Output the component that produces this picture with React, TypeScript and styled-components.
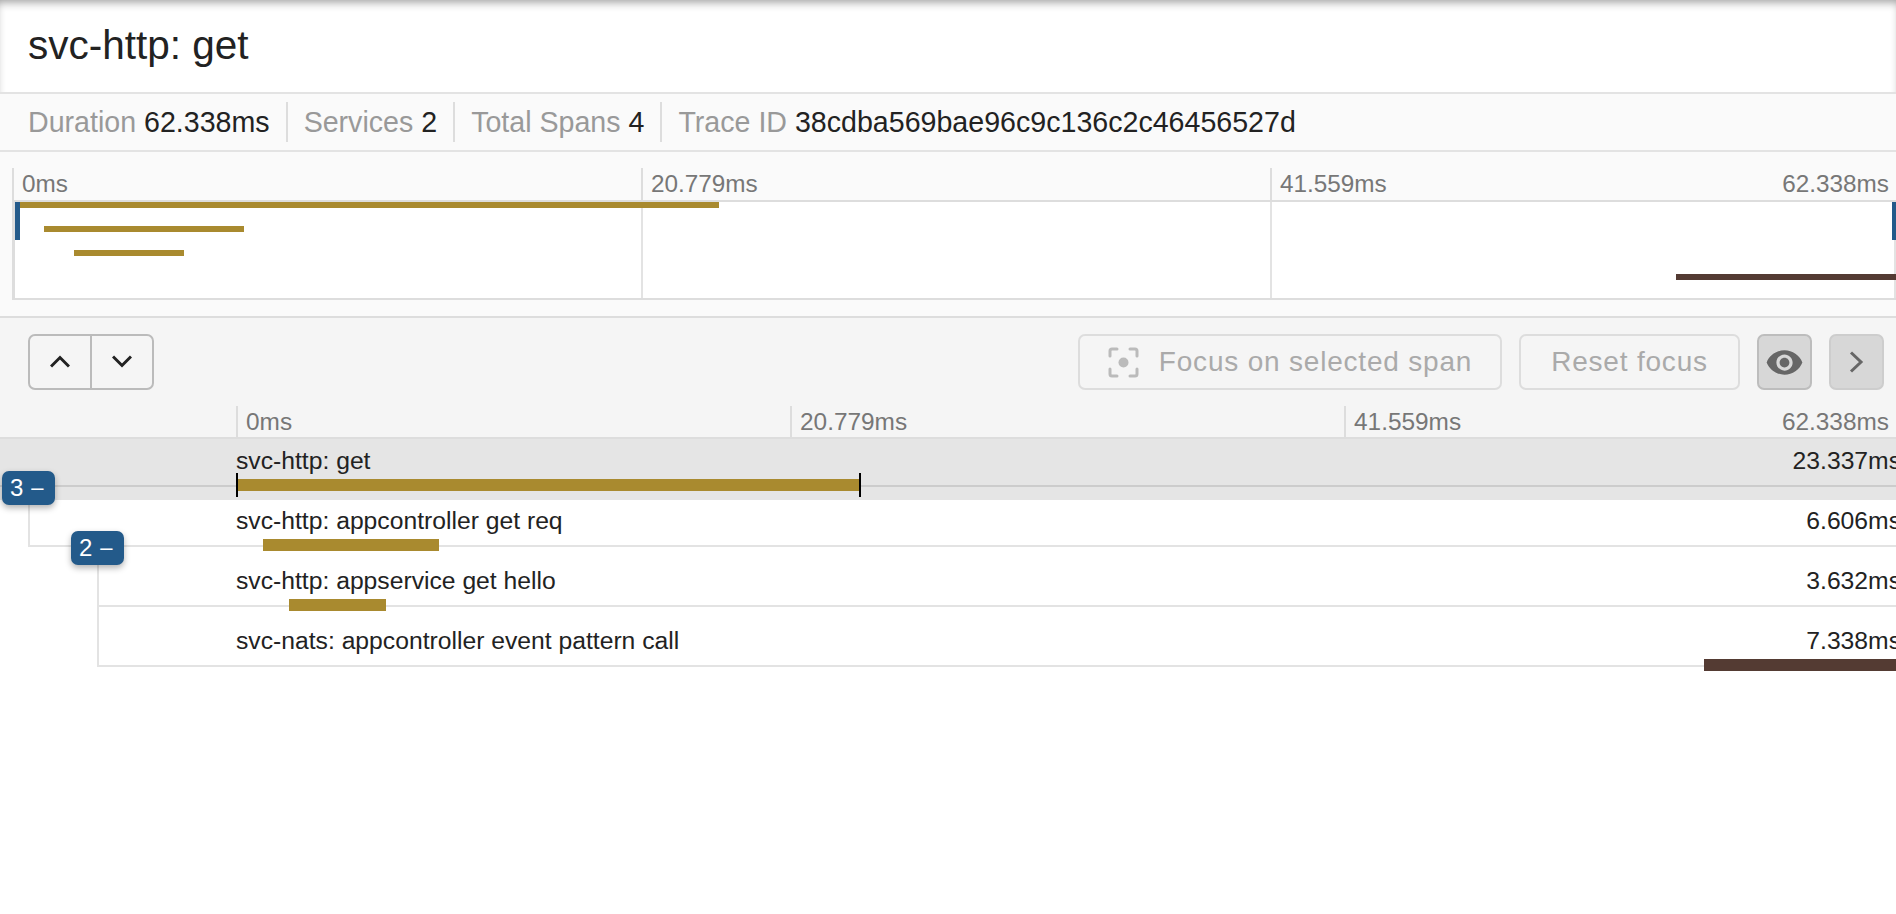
import React from "react"
import styled, { createGlobalStyle } from "styled-components"
import { MdVisibility } from "react-icons/md"

const TOTAL_LEFT = 236

const stats = [
  { label: "Duration", value: "62.338ms" },
  { label: "Services", value: "2" },
  { label: "Total Spans", value: "4" },
  { label: "Trace ID", value: "38cdba569bae96c9c136c2c46456527d" },
]

const miniBars = [
  { left: 20, width: 699, color: "#a98a2f" },
  { left: 44, width: 200, color: "#a98a2f" },
  { left: 74, width: 110, color: "#a98a2f" },
  { left: 1676, width: 220, color: "#543b33" },
]

const spans = [
  { name: "svc-http: get", time: "23.337ms", left: 237, width: 623, color: "#a98a2f", top: 40, indent: 0, pad: 7, height: 48, selected: true, badge: "3", badgeLeft: 2, badgeTop: 32 },
  { name: "svc-http: appcontroller get req", time: "6.606ms", left: 263, width: 176, color: "#a98a2f", top: 39, indent: 28, pad: 6, height: 47, badge: "2", badgeLeft: 71, badgeTop: 31 },
  { name: "svc-http: appservice get hello", time: "3.632ms", left: 289, width: 97, color: "#a98a2f", top: 52, indent: 97, pad: 19, height: 60 },
  { name: "svc-nats: appcontroller event pattern call", time: "7.338ms", left: 1704, width: 192, color: "#543b33", top: 52, indent: 97, pad: 19, height: 60 },
]

export default function App() {
  return (
    <Page>
      <GlobalStyle />
      <Header>
        <Title>svc-http: get</Title>
      </Header>

      <StatsBar>
        {stats.map(({ label, value }) => (
          <Stat key={label}>
            <StatLabel>{label}</StatLabel> {value}
          </Stat>
        ))}
      </StatsBar>

      <MiniSection>
        <MiniTicks>
          <MiniTick>0ms</MiniTick>
          <MiniTick>20.779ms</MiniTick>
          <MiniTick>41.559ms</MiniTick>
          <LastTick>62.338ms</LastTick>
        </MiniTicks>
        <MiniCanvas>
          <MiniHandle $side="left" />
          <MiniHandle $side="right" />
          <MiniGrid />
          <MiniGrid />
          <MiniGrid />
          {miniBars.map(({ left, width, color }, i) => (
            <MiniBar key={left} $color={color} style={{ left: left - 15, width, top: i * 24 }} />
          ))}
        </MiniCanvas>
      </MiniSection>

      <Timeline>
        <Toolbar>
          <NavGroup>
            <NavButton>
              <svg width="20" height="13" viewBox="0 0 20 13" fill="none" stroke="#222" strokeWidth="3">
                <path d="M1 11.5l9-9 9 9" />
              </svg>
            </NavButton>
            <NavButton>
              <svg width="20" height="13" viewBox="0 0 20 13" fill="none" stroke="#222" strokeWidth="3">
                <path d="M1 1.5l9 9 9-9" />
              </svg>
            </NavButton>
          </NavGroup>
          <ToolbarRight>
            <GhostButton $width={424}>
              <svg width="31" height="31" viewBox="0 0 31 31" fill="none" stroke="#bbb" strokeWidth="3" strokeLinecap="round">
                <path d="M9 2H4a2 2 0 0 0-2 2v5M22 2h5a2 2 0 0 1 2 2v5M9 29H4a2 2 0 0 1-2-2v-5M22 29h5a2 2 0 0 0 2-2v-5" />
                <circle cx="15.5" cy="15.5" r="5" fill="#bbb" stroke="none" />
              </svg>
              Focus on selected span
            </GhostButton>
            <GhostButton $width={221}>Reset focus</GhostButton>
            <SquareButton $dark>
              <MdVisibility size={39} color="#666" />
            </SquareButton>
            <SquareButton>
              <svg width="15" height="24" viewBox="0 0 15 24" fill="none" stroke="#666" strokeWidth="3">
                <path d="M2 2.5l10 9.5-10 9.5" />
              </svg>
            </SquareButton>
          </ToolbarRight>
        </Toolbar>

        <TimeHeader>
          <TimeTick>0ms</TimeTick>
          <TimeTick>20.779ms</TimeTick>
          <TimeTick>41.559ms</TimeTick>
          <LastTick>62.338ms</LastTick>
        </TimeHeader>
      </Timeline>

      {spans.map(s => (
        <SpanRow key={s.name} $selected={s.selected}>
          <SpanBody $indent={s.indent} $pad={s.pad} $height={s.height} $selected={s.selected}>
            <SpanName>{s.name}</SpanName>
            <SpanTime>{s.time}</SpanTime>
          </SpanBody>
          <SpanBar $color={s.color} $caps={s.selected} style={{ left: s.left, width: s.width, top: s.top }} />
          {s.badge && (
            <Badge style={{ left: s.badgeLeft, top: s.badgeTop }}>
              {s.badge}
              <BadgeDash>–</BadgeDash>
            </Badge>
          )}
        </SpanRow>
      ))}
    </Page>
  )
}

const GlobalStyle = createGlobalStyle`
  html, body {
    margin: 0;
    background: #fff;
    font-family: "Liberation Sans", Arial, sans-serif;
    color: #222;
  }
  * {
    box-sizing: border-box;
  }
`

const Page = styled.div`
  width: 1896px;
  height: 914px;
  overflow: hidden;
  background: #fff;
`

const Header = styled.div`
  height: 92px;
  padding: 0 28px 2px;
  display: flex;
  align-items: center;
  background: #fff;
  box-shadow: inset 0 6px 10px -4px rgba(0, 0, 0, 0.4);
`

const Title = styled.h1`
  margin: 0;
  font-size: 40.5px;
  font-weight: 400;
  line-height: 48px;
`

const StatsBar = styled.div`
  height: 60px;
  display: flex;
  align-items: center;
  padding-left: 28px;
  background: #fafafa;
  border-top: 2px solid #e3e3e3;
  border-bottom: 2px solid #e3e3e3;
  font-size: 28.6px;
`

const Stat = styled.div`
  height: 40px;
  line-height: 40px;
  padding-right: 16px;
  margin-right: 16px;
  border-right: 2px solid #ddd;
  white-space: nowrap;

  &:last-child {
    border-right: 0;
  }
`

const StatLabel = styled.span`
  color: #999;
`

const MiniSection = styled.div`
  height: 166px;
  padding: 16px 0 0 12px;
  background: #fafafa;
  border-bottom: 2px solid #ddd;
`

const MiniTicks = styled.div`
  display: grid;
  grid-template-columns: 629px 629px 1fr;
  height: 32px;
  position: relative;
  font-size: 24.3px;
  color: #777;
  line-height: 32px;
`

const MiniTick = styled.div`
  padding-left: 8px;
  border-left: 2px solid #ddd;
`

const LastTick = styled.div`
  position: absolute;
  right: 7px;
  top: 0;
`

const MiniCanvas = styled.div`
  position: relative;
  display: grid;
  grid-template-columns: 628px 629px 1fr;
  height: 100px;
  background: #fff;
  border: solid #ddd;
  border-width: 2px 0 2px 3px;
  overflow: hidden;
`

const MiniGrid = styled.div`
  border-right: 2px solid #e3e3e3;

  &:last-of-type {
    border-right: 0;
  }
`

const MiniBar = styled.div<{ $color: string }>`
  position: absolute;
  height: 6px;
  background: ${p => p.$color};
`

const MiniHandle = styled.div<{ $side: "left" | "right" }>`
  position: absolute;
  top: 0;
  ${p => p.$side}: 0;
  width: ${p => (p.$side === "left" ? 5 : 4)}px;
  height: 38px;
  background: #235a8a;
  z-index: 1;
`

const Timeline = styled.div`
  background: #f5f5f5;
`

const Toolbar = styled.div`
  height: 88px;
  padding: 16px 12px 0 28px;
  display: flex;
  justify-content: space-between;
  align-items: flex-start;
`

const NavGroup = styled.div`
  display: flex;
  width: 126px;
  height: 56px;
  border: 2px solid #bbb;
  border-radius: 7px;
`

const NavButton = styled.div`
  flex: 1;
  display: flex;
  align-items: center;
  justify-content: center;
  padding-bottom: 2px;

  & + & {
    border-left: 2px solid #bbb;
  }
`

const ToolbarRight = styled.div`
  display: flex;
  gap: 17px;
`

const GhostButton = styled.div<{ $width: number }>`
  width: ${p => p.$width}px;
  height: 56px;
  display: flex;
  align-items: center;
  justify-content: center;
  gap: 20px;
  border: 2px solid #ddd;
  border-radius: 7px;
  color: #aaa;
  font-size: 28px;
  letter-spacing: 0.8px;
`

const SquareButton = styled.div<{ $dark?: boolean }>`
  width: 55px;
  height: 56px;
  display: flex;
  align-items: center;
  justify-content: center;
  border-radius: 7px;
  background: #d7d7d7;
  border: 2px solid ${p => (p.$dark ? "#bdbdbd" : "#cdcdcd")};
`

const TimeHeader = styled.div`
  position: relative;
  height: 33px;
  padding-left: 236px;
  display: grid;
  grid-template-columns: 554px 554px 1fr;
  border-bottom: 2px solid #ddd;
  font-size: 24.4px;
  line-height: 32px;
  color: #777;
`

const TimeTick = styled.div`
  padding-left: 8px;
  border-left: 2px solid #ddd;
`

const SpanRow = styled.div<{ $selected?: boolean }>`
  position: relative;
  padding-bottom: ${p => (p.$selected ? 13 : 0)}px;
  background: ${p => (p.$selected ? "#e5e5e5" : "transparent")};
`

const SpanBody = styled.div<{ $indent: number; $pad: number; $height: number; $selected?: boolean }>`
  display: flex;
  justify-content: space-between;
  height: ${p => p.$height}px;
  margin-left: ${p => p.$indent}px;
  padding: ${p => p.$pad}px 0 0 ${p => TOTAL_LEFT - p.$indent - (p.$indent ? 2 : 0)}px;
  border-bottom: 2px solid ${p => (p.$selected ? "#ccc" : "#e3e3e3")};
  border-left: ${p => (p.$indent ? "2px solid #e3e3e3" : "0")};
  font-size: 24.7px;
  line-height: 30px;
`

const SpanName = styled.div`
  white-space: nowrap;
`

const SpanTime = styled.div`
  margin-right: -5px;
  white-space: nowrap;
`

const SpanBar = styled.div<{ $color: string; $caps?: boolean }>`
  position: absolute;
  z-index: 1;
  height: 12px;
  background: ${p => p.$color};

  ${p =>
    p.$caps &&
    `
    &::before, &::after {
      content: "";
      position: absolute;
      top: -6px;
      width: 2px;
      height: 24px;
      background: #000;
    }
    &::before { left: -1px; }
    &::after { right: -1px; }
  `}
`

const Badge = styled.div`
  position: absolute;
  z-index: 2;
  width: 53px;
  height: 34px;
  padding-left: 8px;
  display: flex;
  align-items: center;
  gap: 8px;
  border-radius: 7px;
  background: #235a8a;
  color: #fff;
  font-size: 24px;
  box-shadow: 0 3px 6px rgba(0, 0, 0, 0.3);
`

const BadgeDash = styled.span`
  font-size: 22px;
`
